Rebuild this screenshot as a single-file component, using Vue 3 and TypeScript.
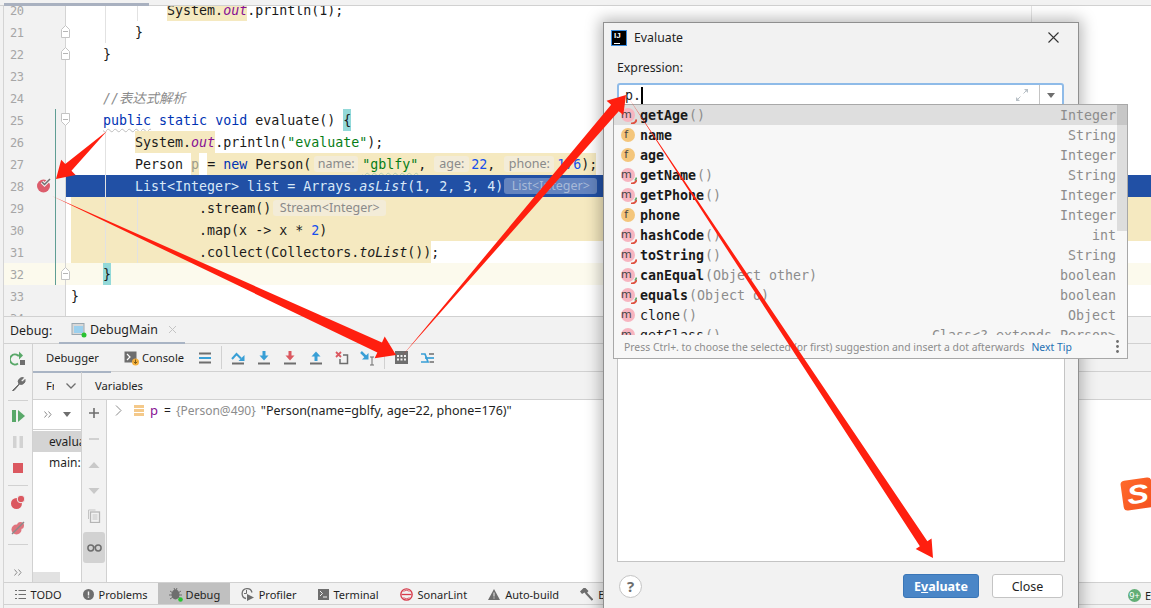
<template>
  <div class="ide">
    <div class="top-strip"><div class="top-thumb"></div></div>

    <div class="editor">
      <div class="rows">
        <div v-for="line in lines" :key="line.n" class="row" :class="{ caret: line.n === 32 }">
          <div class="gutter">
            <span class="num">{{ line.n }}</span>
            <svg v-if="line.fold" class="fold" width="9" height="13" viewBox="0 0 9 13">
              <path v-if="line.fold === 'end'" d="M.5 12.5v-8L4.500.5l4 4v8z" fill="#fff" stroke="#c4c4c4" />
              <path v-else d="M.5.5v8l4 4 4-4v-8z" fill="#fff" stroke="#c4c4c4" />
              <path d="M2 6.500h5" stroke="#b5b5b5" />
            </svg>
          </div>
          <div class="code" :class="line.rowClass">
            <span v-for="(tok, i) in line.toks" :key="i" :class="tok.c">{{ tok.t }}</span>
          </div>
        </div>
      </div>
      <div class="right-margin"></div>
      <div v-for="g in guides" :key="g.x + '-' + g.top" class="guide" :style="{ left: g.x + 'px', top: g.top + 'px', height: g.h + 'px' }"></div>
      <div class="change-bar"></div>
      <svg class="bp" width="16" height="16" viewBox="0 0 16 16">
        <circle cx="7.500" cy="9" r="6.500" fill="#dc5d6c" />
        <path d="M6 5l2.500 2.500L14 2" fill="none" stroke="#f2f2f2" stroke-width="3.500" />
        <path d="M6 5l2.500 2.500L14 2" fill="none" stroke="#707070" stroke-width="1.500" />
      </svg>
    </div>

    <div class="debug">
      <div class="dbg-head">
        <span class="dbg-label">Debug:</span>
        <div class="dbg-run-tab">
          <svg width="16" height="16" viewBox="0 0 16 16">
            <rect x="1" y="1.500" width="12" height="11" fill="#d8d8d8" stroke="#9aa7b0" />
            <rect x="3" y="4" width="9" height="7" fill="#9bd0ee" />
            <circle cx="13" cy="13" r="2.500" fill="#29c232" />
          </svg>
          <span>DebugMain</span>
          <svg class="tab-x" width="9" height="9" viewBox="0 0 9 9"><path d="M1 1l7 7M8 1L1 8" stroke="#c4c4c4" /></svg>
        </div>
      </div>

      <div class="dbg-body">
        <div class="side">
          <svg width="16" height="16" viewBox="0 0 16 16">
            <path d="M11 5.500H8a5 5 0 1 0 0 8" fill="none" stroke="#59a869" stroke-width="2" />
            <path d="M9 1.500v8l4-4z" fill="#59a869" />
            <rect x="10" y="10" width="5" height="5" fill="#6e6e6e" />
          </svg>
          <svg width="16" height="16" viewBox="0 0 16 16">
            <path d="M2.500 14.500L9 8a4 4 0 0 1 .800-5.500 4 4 0 0 1 3.700-.800L11 4.500 12.500 6 15 3.500a4 4 0 0 1-5.500 4.600L4 14.500z" fill="#6e6e6e" stroke="#6e6e6e" stroke-linejoin="round" />
          </svg>
          <i class="side-sep"></i>
          <svg width="16" height="16" viewBox="0 0 16 16">
            <rect x="2" y="2" width="4" height="12" fill="#59a869" />
            <path d="M8 2l7 6-7 6z" fill="#59a869" />
          </svg>
          <svg width="16" height="16" viewBox="0 0 16 16">
            <path d="M3 2h3.500v12H3zM9.500 2H13v12H9.500z" fill="#d2d2d2" />
          </svg>
          <svg width="16" height="16" viewBox="0 0 16 16"><rect x="3" y="3" width="10" height="10" fill="#db5860" /></svg>
          <i class="side-sep wide"></i>
          <svg width="16" height="16" viewBox="0 0 16 16">
            <circle cx="6.500" cy="9.500" r="5.500" fill="#db5860" />
            <circle cx="11" cy="5" r="3.800" fill="#db5860" stroke="#f2f2f2" />
          </svg>
          <svg width="16" height="16" viewBox="0 0 16 16">
            <circle cx="6.500" cy="9.500" r="5" fill="#e0747e" />
            <circle cx="10.500" cy="5.500" r="3.500" fill="#e0747e" />
            <path d="M2 14L14 2" stroke="#8a8a8a" stroke-width="1.400" />
          </svg>
          <i class="side-sep"></i>
          <svg class="side-more" width="8" height="7" viewBox="0 0 8 7"><path d="M.5.500L3 3.500.5 6.500M4.500.500l2.500 3-2.500 3" fill="none" stroke="#8a8a8a" /></svg>
        </div>

        <div class="dbg-main">
          <div class="dbg-tools">
            <div class="debugger-tab">Debugger</div>
            <div class="console-tab">
              <svg width="16" height="16" viewBox="0 0 16 16">
                <rect x="0.500" y="1.500" width="12" height="11" fill="#6e6e6e" />
                <path d="M3 4l3 3-3 3" fill="none" stroke="#fff" stroke-width="1.200" />
                <circle cx="11.500" cy="12" r="3.500" fill="#f4af3d" />
                <path d="M11.500 9.500v4M9.800 11.800l1.700 1.700 1.700-1.700" fill="none" stroke="#7a5b17" />
              </svg>
              <span>Console</span>
            </div>
            <svg class="menu-ic" width="12" height="12" viewBox="0 0 12 12">
              <path d="M0 .500h12v2H0z" fill="#6e6e6e" /><path d="M0 5h12v2H0z" fill="#389fd6" /><path d="M0 9.500h12v2H0z" fill="#6e6e6e" />
            </svg>
            <i class="tool-sep"></i>
            <div class="tool"><svg width="14" height="14" viewBox="0 0 14 14"><path d="M1 8l4.500-5L10 7.500" fill="none" stroke="#389fd6" stroke-width="2" /><path d="M13.500 4v6h-6z" fill="#389fd6" /><path d="M1 12.500h12" stroke="#6e6e6e" stroke-width="2" /></svg></div>
            <div class="tool"><svg width="14" height="14" viewBox="0 0 14 14"><path d="M7 0v5" stroke="#389fd6" stroke-width="3" /><path d="M2.500 4.500h9L7 9.500z" fill="#389fd6" /><path d="M1 12.500h12" stroke="#6e6e6e" stroke-width="2" /></svg></div>
            <div class="tool"><svg width="14" height="14" viewBox="0 0 14 14"><path d="M7 0v5" stroke="#db5860" stroke-width="3" /><path d="M2.500 4.500h9L7 9.500z" fill="#db5860" /><path d="M1 12.500h12" stroke="#6e6e6e" stroke-width="2" /></svg></div>
            <div class="tool"><svg width="14" height="14" viewBox="0 0 14 14"><path d="M7 10V5" stroke="#389fd6" stroke-width="3" /><path d="M2.500 5.500h9L7 .5z" fill="#389fd6" /><path d="M1 12.500h12" stroke="#6e6e6e" stroke-width="2" /></svg></div>
            <div class="tool"><svg width="14" height="14" viewBox="0 0 14 14"><path d="M1 1l5 5M6 1L1 6" stroke="#db5860" stroke-width="1.800" /><path d="M8 4h4.500v8.500H5V8" fill="none" stroke="#6e6e6e" stroke-width="1.500" /></svg></div>
            <div class="tool"><svg width="16" height="16" viewBox="0 0 16 16"><path d="M1 2l5 5" stroke="#389fd6" stroke-width="2.500" /><path d="M8.500 3v6.500H2z" fill="#389fd6" /><path d="M10 7h4M10 15h4M12 7v8" stroke="#6e6e6e" /></svg></div>
            <i class="tool-sep calc-sep"></i>
            <div class="tool"><svg width="13" height="13" viewBox="0 0 13 13"><rect width="13" height="13" fill="#6e6e6e" /><path d="M2 4h2v2H2zM5.500 4h2v2h-2zM9 4h2v2H9zM2 7.500h2v2H2zM5.500 7.500h2v2h-2zM9 7.500h2v2H9z" fill="#f2f2f2" /></svg></div>
            <div class="tool"><svg width="13" height="12" viewBox="0 0 13 12"><path d="M0 2h4l3 8H0" fill="none" stroke="#389fd6" stroke-width="1.700" /><path d="M4 6h9" stroke="#389fd6" stroke-width="1.700" /><path d="M8 2h5M8.500 10H13" stroke="#6e6e6e" stroke-width="1.700" /></svg></div>
          </div>

          <div class="dbg-panes">
            <div class="frames">
              <div class="frames-head">
                <span>Frames</span>
                <svg width="10" height="6" viewBox="0 0 10 6"><path d="M.5.500L5 5 9.500.500" fill="none" stroke="#6e6e6e" stroke-width="1.300" /></svg>
              </div>
              <div class="thread-row">
                <svg width="8" height="7" viewBox="0 0 8 7"><path d="M.5.500L3 3.500.5 6.500M4.500.500l2.500 3-2.500 3" fill="none" stroke="#8a8a8a" /></svg>
                <i class="tri-down"></i>
              </div>
              <div class="frame-list">
                <div class="frame selected">evaluate</div>
                <div class="frame">main:</div>
              </div>
              <div class="frame-scroll"><div class="frame-thumb"></div></div>
            </div>
            <div class="vars">
              <div class="vars-head">Variables</div>
              <div class="vars-body">
                <div class="var-tools">
                  <svg width="12" height="12" viewBox="0 0 12 12"><path d="M6 1v10M1 6h10" stroke="#6e6e6e" stroke-width="1.600" /></svg>
                  <svg width="12" height="12" viewBox="0 0 12 12"><path d="M1 6h10" stroke="#c9c9c9" stroke-width="1.600" /></svg>
                  <svg width="12" height="12" viewBox="0 0 12 12"><path d="M.5 9L6 3l5.500 6z" fill="#c9c9c9" /></svg>
                  <svg width="12" height="12" viewBox="0 0 12 12"><path d="M.5 3L6 9l5.500-6z" fill="#c9c9c9" /></svg>
                  <svg class="copy-ic" width="14" height="14" viewBox="0 0 14 14"><path d="M1.500 10V1h7" fill="none" stroke="#c4c4c4" /><rect x="3.500" y="3" width="9" height="10.500" fill="none" stroke="#b5b5b5" stroke-width="1.300" /><path d="M5.500 6h5M5.500 8h5M5.500 10h5" stroke="#c4c4c4" /></svg>
                  <div class="glasses">
                    <svg width="15" height="8" viewBox="0 0 15 8"><circle cx="3.800" cy="4" r="2.900" fill="none" stroke="#6e6e6e" stroke-width="1.500" /><circle cx="11.200" cy="4" r="2.900" fill="none" stroke="#6e6e6e" stroke-width="1.500" /><path d="M6 3h3" stroke="#6e6e6e" /></svg>
                  </div>
                </div>
                <div class="var-tree">
                  <svg width="7" height="11" viewBox="0 0 7 11"><path d="M1 .5l5 5-5 5" fill="none" stroke="#8a8a8a" /></svg>
                  <svg class="var-ic" width="10" height="11" viewBox="0 0 10 11"><path d="M0 0h10v3H0zM0 4h10v3H0zM0 8h10v3H0z" fill="#f4c98a" /></svg>
                  <span class="v-name">p</span>
                  <span class="v-eq">=</span>
                  <span class="v-ref">{Person@490}</span>
                  <span class="v-str">"Person(name=gblfy, age=22, phone=176)"</span>
                </div>
              </div>
            </div>
          </div>
        </div>
      </div>
    </div>

    <div class="tool-bar">
      <div class="tw">
        <svg width="11" height="9" viewBox="0 0 11 9"><path d="M0 .5h2M3.500.5H11M0 4.500h2M3.500 4.500H11M0 8.500h2M3.500 8.500H11" stroke="#6e6e6e" /></svg>
        <span>TODO</span>
      </div>
      <div class="tw">
        <svg width="11" height="11" viewBox="0 0 11 11"><circle cx="5.500" cy="5.500" r="5.500" fill="#6e6e6e" /><path d="M5.500 2.500v4M5.500 7.500v1.200" stroke="#f2f2f2" stroke-width="1.400" /></svg>
        <span>Problems</span>
      </div>
      <div class="tw active">
        <svg width="14" height="15" viewBox="0 0 14 15">
          <ellipse cx="6.500" cy="7.500" rx="4" ry="5" fill="#6e6e6e" />
          <path d="M1 4l3 2M12 4L9 6M0 8h3M10 8h3M1 12l3-2M12 12l-3-2M5 1l1 2M8 1L7 3" stroke="#6e6e6e" />
          <circle cx="11.500" cy="12.500" r="2.300" fill="#29c232" />
        </svg>
        <span>Debug</span>
      </div>
      <div class="tw">
        <svg width="13" height="14" viewBox="0 0 13 14">
          <path d="M5 11.500a5 5 0 1 1 6-6" fill="none" stroke="#6e6e6e" stroke-width="1.300" /><path d="M5.500 3v3.500H3" fill="none" stroke="#6e6e6e" /><path d="M6 7l7 3.500L6 14z" fill="#6e6e6e" />
        </svg>
        <span>Profiler</span>
      </div>
      <div class="tw">
        <svg width="11" height="11" viewBox="0 0 11 11"><rect width="11" height="11" fill="#6e6e6e" /><path d="M2 2l2.500 2.500L2 7M5 8h4" fill="none" stroke="#f2f2f2" /></svg>
        <span>Terminal</span>
      </div>
      <div class="tw">
        <svg width="13" height="13" viewBox="0 0 13 13"><circle cx="6.500" cy="6.500" r="5.700" fill="none" stroke="#d63b4b" stroke-width="1.300" /><path d="M1.500 6.500h10" stroke="#d63b4b" stroke-width="1.300" /><path d="M3.500 3.500c2-1.500 4-1.500 6 0M3.500 9.500c2 1.500 4 1.500 6 0" fill="none" stroke="#d63b4b" stroke-width=".8" /></svg>
        <span>SonarLint</span>
      </div>
      <div class="tw">
        <svg width="12" height="11" viewBox="0 0 12 11"><path d="M6 0l6 11H0z" fill="#6e6e6e" /><path d="M6 3.500v4M6 8.500v1" stroke="#f2f2f2" /></svg>
        <span>Auto-build</span>
      </div>
      <div class="tw">
        <svg width="13" height="13" viewBox="0 0 13 13"><path d="M6 5l6.500 7" stroke="#6e6e6e" stroke-width="2" /><path d="M0 3.500L3.500 0h2l3 3L6 6 4.500 4.500 2 6z" fill="#6e6e6e" /></svg>
        <span>Build</span>
      </div>
      <div class="event-log">
        <span class="badge">9+</span>
        <span>Event Log</span>
      </div>
    </div>

    <!-- floating window from the screenshot -->
    <div class="dialog">
      <div class="dlg-title">
        <span class="ij-logo"><b>IJ</b><i></i></span>
        <span class="dlg-name">Evaluate</span>
        <svg width="11" height="11" viewBox="0 0 11 11"><path d="M.5.5l10 10M10.500.5l-10 10" stroke="#333" stroke-width="1.100" /></svg>
      </div>
      <div class="dlg-body">
        <label class="expr-label">Expression:</label>
        <div class="expr-input">
          <span class="expr-text">p.</span><i class="text-caret"></i>
          <svg class="expand" width="12" height="12" viewBox="0 0 12 12"><path d="M7.500 4.500L11 1M0.500 11.500L4.500 7.500" stroke="#b8c0c6" /><path d="M8 0h4v4zM0 8v4h4z" fill="#b8c0c6" /></svg>
          <div class="expr-drop"><i class="tri-down"></i></div>
        </div>
        <div class="result-box"></div>
        <div class="dlg-foot">
          <div class="help">?</div>
          <button class="btn primary">E<u>v</u>aluate</button>
          <button class="btn">Close</button>
        </div>
      </div>
    </div>

    <div class="popup">
      <div class="pop-list">
        <div v-for="(item, i) in items" :key="item.name" class="pop-row" :class="{ sel: i === 0 }">
          <span class="kind" :class="item.kind">{{ item.kind }}
            <svg v-if="item.over" class="over" width="7" height="7" viewBox="0 0 7 7">
              <path d="M1 6.500a5 5 0 0 0 5.500-4" fill="none" stroke="#e0503f" stroke-width="2" />
              <path v-if="item.over === 'g'" d="M5 3.500l1.500-3" stroke="#59a869" stroke-width="1.500" />
            </svg>
          </span>
          <span class="pop-name" :class="{ plain: item.plain }">{{ item.name }}</span>
          <span class="pop-args">{{ item.args }}</span>
          <span class="pop-type">{{ item.type }}</span>
        </div>
      </div>
      <div class="pop-scroll"><div class="pop-thumb"></div></div>
      <div class="pop-foot">
        <span>Press Ctrl+. to choose the selected (or first) suggestion and insert a dot afterwards</span>
        <a class="next-tip">Next Tip</a>
        <svg width="3" height="13" viewBox="0 0 3 13"><circle cx="1.500" cy="1.500" r="1.400" fill="#6e6e6e" /><circle cx="1.500" cy="6.500" r="1.400" fill="#6e6e6e" /><circle cx="1.500" cy="11.500" r="1.400" fill="#6e6e6e" /></svg>
      </div>
    </div>

    <div class="sogou"><span>S</span></div>

    <svg class="arrows" width="1151" height="608" viewBox="0 0 1151 608">
      <polygon v-for="(pts, i) in arrowPolys" :key="i" :points="pts" fill="#ff1f0f" />
    </svg>
  </div>
</template>

<script setup lang="ts">
import { computed } from 'vue';

interface Tok { t: string; c?: string }
interface Line { n: number; toks: Tok[]; fold?: 'end' | 'start'; rowClass?: string }

const sp = (n: number): Tok => ({ t: ' '.repeat(n) });

const lines: Line[] = [
  { n: 20, toks: [sp(12), { t: 'System.', c: 'hl' }, { t: 'out', c: 'hl field' }, { t: '.println(1);' }] },
  { n: 21, fold: 'end', toks: [sp(8), { t: '}' }] },
  { n: 22, fold: 'end', toks: [sp(4), { t: '}' }] },
  { n: 23, toks: [] },
  { n: 24, toks: [sp(4), { t: '//表达式解析', c: 'comment' }] },
  {
    n: 25,
    fold: 'start',
    toks: [
      sp(4), { t: 'public', c: 'kw squig-grey' }, { t: ' ' }, { t: 'static void', c: 'kw' },
      { t: ' evaluate() ' }, { t: '{', c: 'brace' },
    ],
  },
  {
    n: 26,
    toks: [
      sp(8), { t: 'System.', c: 'hl' }, { t: 'out', c: 'hl field' }, { t: '.println(' },
      { t: '"evaluate"', c: 'str' }, { t: ');' },
    ],
  },
  {
    n: 27,
    rowClass: 'partial',
    toks: [
      sp(8), { t: 'Person ' }, { t: 'p', c: 'hl dim' }, { t: ' ' }, { t: '= ' }, { t: 'new', c: 'kw' },
      { t: ' Person(' }, { t: 'name:', c: 'inlay in-name' }, { t: '"gblfy"', c: 'str squig' }, { t: ', ' },
      { t: 'age:', c: 'inlay in-age' }, { t: '22', c: 'numb' }, { t: ', ' }, { t: 'phone:', c: 'inlay in-phone' },
      { t: '176', c: 'numb' }, { t: ');' },
    ],
  },
  {
    n: 28,
    rowClass: 'exec',
    toks: [sp(8), { t: 'List<Integer> list = Arrays.' }, { t: 'asList', c: 'ital' }, { t: '(1, 2, 3, 4)' }, { t: 'List<Integer>', c: 'inlay blue' }],
  },
  { n: 29, rowClass: 'yellow', toks: [sp(16), { t: '.stream()' }, { t: 'Stream<Integer>', c: 'inlay hint' }] },
  { n: 30, rowClass: 'yellow', toks: [sp(16), { t: '.map(x -> x * ' }, { t: '2', c: 'numb' }, { t: ')' }] },
  { n: 31, toks: [{ t: ' '.repeat(16) + '.collect(Collectors.', c: 'hl' }, { t: 'toList', c: 'hl ital' }, { t: '())', c: 'hl' }, { t: ';' }] },
  { n: 32, fold: 'end', toks: [sp(4), { t: '}', c: 'brace' }] },
  { n: 33, toks: [{ t: '}' }] },
  { n: 34, toks: [] },
];

// indent guides, in editor coordinates
const guides = [
  { x: 101, top: 0, h: 37 },
  { x: 133, top: 0, h: 15 },
  { x: 101, top: 125, h: 132 },
  { x: 133, top: 191, h: 66 },
];

const items = [
  { kind: 'm', name: 'getAge', args: '()', type: 'Integer', over: 'r' },
  { kind: 'f', name: 'name', args: '', type: 'String' },
  { kind: 'f', name: 'age', args: '', type: 'Integer' },
  { kind: 'm', name: 'getName', args: '()', type: 'String', over: 'g' },
  { kind: 'm', name: 'getPhone', args: '()', type: 'Integer', over: 'g' },
  { kind: 'f', name: 'phone', args: '', type: 'Integer' },
  { kind: 'm', name: 'hashCode', args: '()', type: 'int', over: 'r' },
  { kind: 'm', name: 'toString', args: '()', type: 'String', over: 'r' },
  { kind: 'm', name: 'canEqual', args: '(Object other)', type: 'boolean', over: 'g' },
  { kind: 'm', name: 'equals', args: '(Object o)', type: 'boolean', over: 'g' },
  { kind: 'm', name: 'clone', args: '()', type: 'Object', plain: true },
  { kind: 'm', name: 'getClass', args: '()', type: 'Class<? extends Person>', plain: true },
];

// the red annotation arrows: tail, tip, body width at the neck, head length and width
const arrows = [
  { from: [107, 131], to: [56, 179], body: 9, len: 17, head: 21 },
  { from: [52, 196], to: [396, 355], body: 11, len: 18, head: 24 },
  { from: [402, 356], to: [626, 95], body: 10, len: 17, head: 22 },
  { from: [628, 97], to: [933, 558], body: 9, len: 17, head: 19 },
];

const arrowPolys = computed(() =>
  arrows.map(({ from, to, body, len, head }) => {
    const dx = to[0] - from[0];
    const dy = to[1] - from[1];
    const d = Math.hypot(dx, dy);
    const ux = dx / d;
    const uy = dy / d;
    const nx = -uy;
    const ny = ux;
    const neck = [to[0] - ux * len, to[1] - uy * len];
    const at = (w: number) => `${neck[0] + nx * w},${neck[1] + ny * w}`;
    return [
      `${from[0]},${from[1]}`,
      at(body / 2),
      at(head / 2),
      `${to[0]},${to[1]}`,
      at(-head / 2),
      at(-body / 2),
    ].join(' ');
  }),
);
</script>

<style scoped>
.ide {
  position: relative;
  width: 1151px;
  height: 608px;
  overflow: hidden;
  display: flex;
  flex-direction: column;
  background: #f2f2f2;
  font-family: "Noto Sans", "Open Sans", sans-serif;
  font-size: 11.2px;
  color: #1f1f1f;
  box-sizing: border-box;
  padding-left: 3px;
}
.ide::before {
  content: "";
  position: absolute;
  left: 3px;
  top: 0;
  bottom: 0;
  width: 1px;
  background: #d4d4d4;
  z-index: 1;
}
.top-strip {
  height: 5px;
  flex: none;
  border-bottom: 1px solid #d1d1d1;
  background: #f2f2f2;
  margin-left: -3px;
  position: relative;
  z-index: 2;
}
.top-thumb {
  position: absolute;
  left: 4px;
  top: 3px;
  width: 145px;
  height: 3px;
  background: #a9b1c0;
}

/* editor */
.editor {
  position: relative;
  height: 310px;
  flex: none;
  overflow: hidden;
  background: #fff;
  margin-left: 1px;
}
.rows {
  margin-top: -7px;
}
.row {
  display: flex;
  height: 22px;
  font: 13.3px/24px "DejaVu Sans Mono", monospace;
  color: #1a1a1a;
}
.row.caret {
  background: #fcfaed;
}
.row.caret .gutter {
  background: #fcfaed;
}
.gutter {
  position: relative;
  width: 61px;
  flex: none;
  background: #f2f2f2;
  border-right: 1px solid #d4d4d4;
  box-sizing: content-box;
}
.num {
  position: absolute;
  left: 6px;
  top: 0;
  font-size: 12px;
  letter-spacing: -0.5px;
  color: #a6a6a6;
}
.fold {
  position: absolute;
  left: 57px;
  top: 4px;
}
.code {
  flex: 1;
  min-width: 0;
  padding-left: 5px;
  white-space: pre;
}
.code.exec {
  background: #2150a5;
  color: #d8e8f8;
}
.code.yellow {
  background: linear-gradient(to right, transparent 5px, #f5e9c0 5px);
}
/* line 27 is only highlighted from the "=" on, up to its end */
.code.partial {
  background: linear-gradient(to right, transparent 141px, #f5e9c0 141px, #f5e9c0 530px, transparent 530px);
}
.hl {
  background: #f5e9c0;
  display: inline-block;
  height: 22px;
  vertical-align: top;
}
.kw {
  color: #0033b3;
}
.str {
  color: #067d17;
}
.numb {
  color: #1750eb;
}
.field {
  color: #871094;
  font-style: italic;
}
.ital {
  font-style: italic;
}
.dim {
  color: #9d9d8c;
}
.comment {
  color: #8c8c8c;
  font-style: italic;
  font-family: "DejaVu Sans Mono", "Noto Sans CJK SC", monospace;
}
.brace {
  background: #93d9d9;
  display: inline-block;
  height: 22px;
  vertical-align: top;
}
.squig {
  text-decoration: underline wavy #b5c9a8 1px;
  text-underline-offset: 3px;
}
.squig-grey {
  text-decoration: underline wavy #bdbdbd 1px;
  text-underline-offset: 3px;
}
.inlay {
  display: inline-block;
  height: 16px;
  vertical-align: top;
  margin-top: 3px;
  border-radius: 3px;
  background: #f3ecd8;
  color: #8a8a8a;
  font: 12.5px/16px "Noto Sans", sans-serif;
  text-align: center;
  box-sizing: border-box;
}
.in-name {
  margin-left: 3px;
  margin-right: 4px;
  width: 44px;
}
.in-age {
  margin-right: 2px;
  width: 35px;
}
.in-phone {
  margin-left: 1px;
  margin-right: 3px;
  width: 50px;
}
.inlay.blue {
  margin-left: 1px;
  width: 93px;
  background: #6484bf;
  color: #a8bad8;
}
.inlay.hint {
  margin-left: 2px;
  width: 113px;
}
.right-margin {
  position: absolute;
  left: 1027px;
  top: 0;
  bottom: 0;
  width: 1px;
  background: #e4e4e4;
}
.guide {
  position: absolute;
  width: 1px;
  background: #e2e2e2;
}
.change-bar {
  position: absolute;
  left: 51px;
  top: 103px;
  width: 1px;
  height: 176px;
  background: #5f9e94;
}
.bp {
  position: absolute;
  left: 32px;
  top: 171px;
}

/* debug tool window */
.debug {
  flex: none;
  height: 266px;
  display: flex;
  flex-direction: column;
  border-top: 1px solid #d1d1d1;
  box-sizing: border-box;
  margin-left: 1px;
}
.dbg-head {
  height: 26px;
  flex: none;
  display: flex;
  align-items: stretch;
  border-bottom: 1px solid #d1d1d1;
  box-sizing: content-box;
  font-size: 12.4px;
}
.dbg-label {
  line-height: 27px;
  margin-left: 6px;
  width: 49px;
}
.dbg-run-tab {
  display: flex;
  align-items: center;
  gap: 3px;
  width: 126px;
  padding-left: 12px;
  box-sizing: border-box;
  border-bottom: 2px solid #a9b4c4;
  margin-bottom: -1px;
}
.tab-x {
  margin-left: 7px;
}
.dbg-body {
  flex: 1;
  min-height: 0;
  display: flex;
}
.side {
  width: 28px;
  flex: none;
  border-right: 1px solid #d1d1d1;
  display: flex;
  flex-direction: column;
  align-items: center;
  padding-top: 6px;
  box-sizing: content-box;
  gap: 10px;
}
.side-sep {
  width: 20px;
  height: 1px;
  background: #d1d1d1;
  flex: none;
  margin: -2px 0 -3px;
}
.side-sep.wide {
  margin: -1px 0 -2px;
}
.side-more {
  margin-top: 17px;
}
.dbg-main {
  flex: 1;
  min-width: 0;
  display: flex;
  flex-direction: column;
}
.dbg-tools {
  height: 27px;
  flex: none;
  display: flex;
  align-items: center;
  border-bottom: 1px solid #d1d1d1;
  box-sizing: content-box;
}
.debugger-tab {
  width: 78px;
  height: 29px;
  line-height: 27px;
  padding-left: 13px;
  box-sizing: border-box;
  border-bottom: 2px solid #a9b4c4;
  margin-top: 1px;
}
.console-tab {
  display: flex;
  align-items: center;
  gap: 2px;
  margin-left: 13px;
  width: 75px;
}
.menu-ic {
  flex: none;
}
.tool-sep {
  width: 1px;
  height: 23px;
  background: #d1d1d1;
  margin: 0 3px 0 10px;
  flex: none;
}
.calc-sep {
  margin: 0 3px 0 3px;
}
.tool {
  width: 26px;
  flex: none;
  display: flex;
  justify-content: center;
  align-items: center;
}
.dbg-panes {
  flex: 1;
  min-height: 0;
  display: flex;
}
.frames {
  width: 48px;
  flex: none;
  border-right: 1px solid #d1d1d1;
  display: flex;
  flex-direction: column;
  box-sizing: content-box;
}
.frames-head {
  height: 27px;
  flex: none;
  display: flex;
  align-items: center;
  padding-left: 13px;
  gap: 12px;
  border-bottom: 1px solid #d1d1d1;
}
.frames-head span {
  width: 8px;
  overflow: hidden;
}
.thread-row {
  height: 29px;
  flex: none;
  display: flex;
  align-items: center;
  gap: 11px;
  padding-left: 11px;
  background: #fff;
  border-bottom: 1px solid #d1d1d1;
}
.tri-down {
  display: block;
  width: 0;
  height: 0;
  border-left: 4.500px solid transparent;
  border-right: 4.500px solid transparent;
  border-top: 5px solid #6e6e6e;
}
.frame-list {
  flex: 1;
  background: #fff;
  overflow: hidden;
  padding-top: 1px;
  font-size: 12px;
}
.frame {
  height: 21px;
  line-height: 21px;
  padding-left: 16px;
  white-space: nowrap;
  overflow: hidden;
}
.frame.selected {
  background: #d4d4d4;
}
.frame-scroll {
  height: 10px;
  flex: none;
  background: #fff;
}
.frame-thumb {
  width: 27px;
  height: 10px;
  background: #e2e2e2;
}
.vars {
  flex: 1;
  min-width: 0;
  display: flex;
  flex-direction: column;
}
.vars-head {
  height: 27px;
  flex: none;
  line-height: 27px;
  padding-left: 13px;
  border-bottom: 1px solid #d1d1d1;
}
.vars-body {
  flex: 1;
  min-height: 0;
  display: flex;
}
.var-tools {
  width: 24px;
  flex: none;
  border-right: 1px solid #d1d1d1;
  display: flex;
  flex-direction: column;
  align-items: center;
  padding-top: 7px;
  gap: 14px;
  box-sizing: content-box;
}
.copy-ic {
  margin-top: -2px;
}
.glasses {
  width: 22px;
  height: 31px;
  margin-top: -5px;
  background: #d2d2d2;
  border-radius: 3px;
  display: flex;
  align-items: center;
  justify-content: center;
}
.var-tree {
  flex: 1;
  background: #fff;
  display: flex;
  align-items: flex-start;
  padding: 3px 0 0 8px;
  line-height: 15px;
  white-space: pre;
  font-size: 12px;
}
.var-tree > svg {
  margin-top: 2px;
}
.var-tree > .var-ic {
  margin: 2px 0 0 12px;
}
.v-name {
  color: #871094;
  margin-left: 6px;
  font-size: 13px;
}
.v-eq {
  margin: 0 5px 0 6px;
}
.v-ref {
  color: #8c8c8c;
  margin-right: 5px;
}
.v-str {
  font-size: 12.5px;
}

/* bottom tool buttons */
.tool-bar {
  height: 26px;
  flex: none;
  margin-left: 1px;
  display: flex;
  align-items: stretch;
  border-top: 1px solid #d1d1d1;
  box-sizing: border-box;
  font-size: 11px;
}
.tw {
  height: 21px;
  display: flex;
  align-items: center;
  gap: 5px;
  padding: 1px 10.500px 0;
  box-sizing: border-box;
  white-space: nowrap;
}
.tw.active {
  background: #c0c0c0;
  gap: 3px;
  padding-right: 10px;
}
.event-log {
  position: absolute;
  left: 1128px;
  top: 588px;
  display: flex;
  gap: 4px;
  white-space: nowrap;
  align-items: center;
}
.badge {
  width: 13px;
  height: 13px;
  border-radius: 50%;
  background: #62ae76;
  color: #fff;
  font-size: 9px;
  line-height: 13px;
  text-align: center;
}
.tool-bar::after {
  content: "";
  position: absolute;
  left: 4px;
  right: 0;
  top: 604px;
  height: 1px;
  background: #d1d1d1;
}

/* evaluate dialog */
.dialog {
  position: absolute;
  left: 603px;
  top: 22px;
  width: 476px;
  height: 600px;
  background: #f2f2f2;
  border: 1px solid #8f8f8f;
  box-sizing: border-box;
  box-shadow: 0 0 14px 3px rgba(0, 0, 0, 0.28);
  z-index: 3;
  display: flex;
  flex-direction: column;
  font-size: 12.3px;
}
.dlg-title {
  height: 29px;
  flex: none;
  display: flex;
  align-items: center;
  padding: 0 19px 0 7px;
}
.ij-logo {
  position: relative;
  width: 16px;
  height: 16px;
  background: #000;
  outline: 1px solid #3b8de0;
  outline-offset: -1px;
  color: #fff;
  font: bold 8px/8px "Liberation Sans", sans-serif;
  margin-right: 7px;
}
.ij-logo b {
  display: block;
  padding: 2px 0 0 3px;
}
.ij-logo i {
  position: absolute;
  left: 3px;
  bottom: 2px;
  width: 6px;
  height: 1px;
  background: #fff;
}
.dlg-name {
  flex: 1;
}
.dlg-body {
  flex: 1;
  min-height: 0;
  display: flex;
  flex-direction: column;
  padding: 7px 13px 0 13px;
}
.expr-label {
  line-height: 17px;
  height: 17px;
}
.expr-input {
  margin-top: 7px;
  height: 24px;
  flex: none;
  position: relative;
  display: flex;
  align-items: center;
  background: #fff;
  border: 2px solid #8fbbe8;
  border-radius: 3px;
  box-sizing: border-box;
  padding-left: 6px;
  margin-right: 1px;
  font: 13.3px "DejaVu Sans Mono", monospace;
}
.text-caret {
  width: 2px;
  height: 17px;
  background: #000;
}
.expand {
  position: absolute;
  right: 34px;
  top: 4px;
}
.expr-drop {
  position: absolute;
  right: 0;
  top: 0;
  bottom: 0;
  width: 22px;
  border-left: 1px solid #c4c4c4;
  display: flex;
  align-items: center;
  justify-content: center;
}
.result-box {
  flex: none;
  margin-top: 8px;
  height: 447px;
  background: #fff;
  border: 1px solid #c4c4c4;
  box-sizing: border-box;
}
.dlg-foot {
  margin-top: 12px;
  display: flex;
  align-items: center;
  padding: 0 2px;
}
.help {
  width: 21px;
  height: 21px;
  border: 1px solid #c4c4c4;
  border-radius: 50%;
  background: #fff;
  color: #6e6e6e;
  font: bold 15px/21px "Noto Sans", sans-serif;
  text-align: center;
  margin-right: auto;
}
.btn {
  height: 24px;
  width: 71px;
  box-sizing: border-box;
  border: 1px solid #c4c4c4;
  border-radius: 3px;
  background: #fff;
  color: #1f1f1f;
  font: 12.5px "Noto Sans", sans-serif;
  padding: 0;
}
.btn.primary {
  width: 76px;
  margin-right: 13px;
  background: #4a86c7;
  border-color: #3a76b7;
  color: #fff;
  font-weight: 700;
}

/* completion popup */
.popup {
  position: absolute;
  left: 613px;
  top: 104px;
  width: 515px;
  height: 255px;
  background: #f7f7f7;
  border: 1px solid #a8a8a8;
  box-sizing: border-box;
  z-index: 4;
  display: flex;
  flex-direction: column;
}
.pop-list {
  height: 230px;
  flex: none;
  overflow: hidden;
}
.pop-row {
  height: 20px;
  display: flex;
  align-items: flex-start;
  padding: 0 11px 0 7px;
  font: 13.3px/22px "DejaVu Sans Mono", monospace;
  color: #8c8c8c;
  white-space: pre;
}
.pop-row.sel {
  background: #dedede;
}
.kind {
  position: relative;
  width: 14px;
  height: 14px;
  flex: none;
  border-radius: 50%;
  font: 11px/14px "DejaVu Sans", sans-serif;
  text-align: center;
  color: #444;
  margin: 3px 5px 0 0;
}
.kind.m {
  background: #f7b5c0;
}
.kind.f {
  background: #f4c67c;
}
.over {
  position: absolute;
  right: -2px;
  bottom: -2px;
}
.pop-name {
  font-weight: 700;
  color: #1a1a1a;
}
.pop-name.plain {
  font-weight: 400;
}
.pop-args {
  margin-left: 1px;
}
.pop-type {
  margin-left: auto;
}
.pop-scroll {
  position: absolute;
  right: 0;
  top: 0;
  width: 10px;
  height: 126px;
}
.pop-thumb {
  height: 100%;
  background: rgba(0, 0, 0, 0.1);
}
.pop-foot {
  flex: 1;
  display: flex;
  align-items: center;
  padding: 0 8px 0 10px;
  font-size: 10.4px;
  color: #8c8c8c;
  white-space: nowrap;
}
.next-tip {
  color: #2470b3;
  margin-left: 7px;
}
.pop-foot svg {
  margin-left: auto;
}

.sogou {
  position: absolute;
  left: 1122px;
  top: 479px;
  width: 31px;
  height: 30px;
  border-radius: 4px;
  background: linear-gradient(135deg, #ff6a2c, #f4511e);
  transform: rotate(-8deg);
  color: #fff;
  font: italic 900 26px/30px "Liberation Sans", sans-serif;
  text-align: center;
}
.sogou span {
  display: inline-block;
  transform: scaleX(1.25);
}
.arrows {
  position: absolute;
  left: 0;
  top: 0;
  z-index: 5;
  pointer-events: none;
}
</style>

<style>
html, body {
  margin: 0;
  background: #f2f2f2;
}
</style>
